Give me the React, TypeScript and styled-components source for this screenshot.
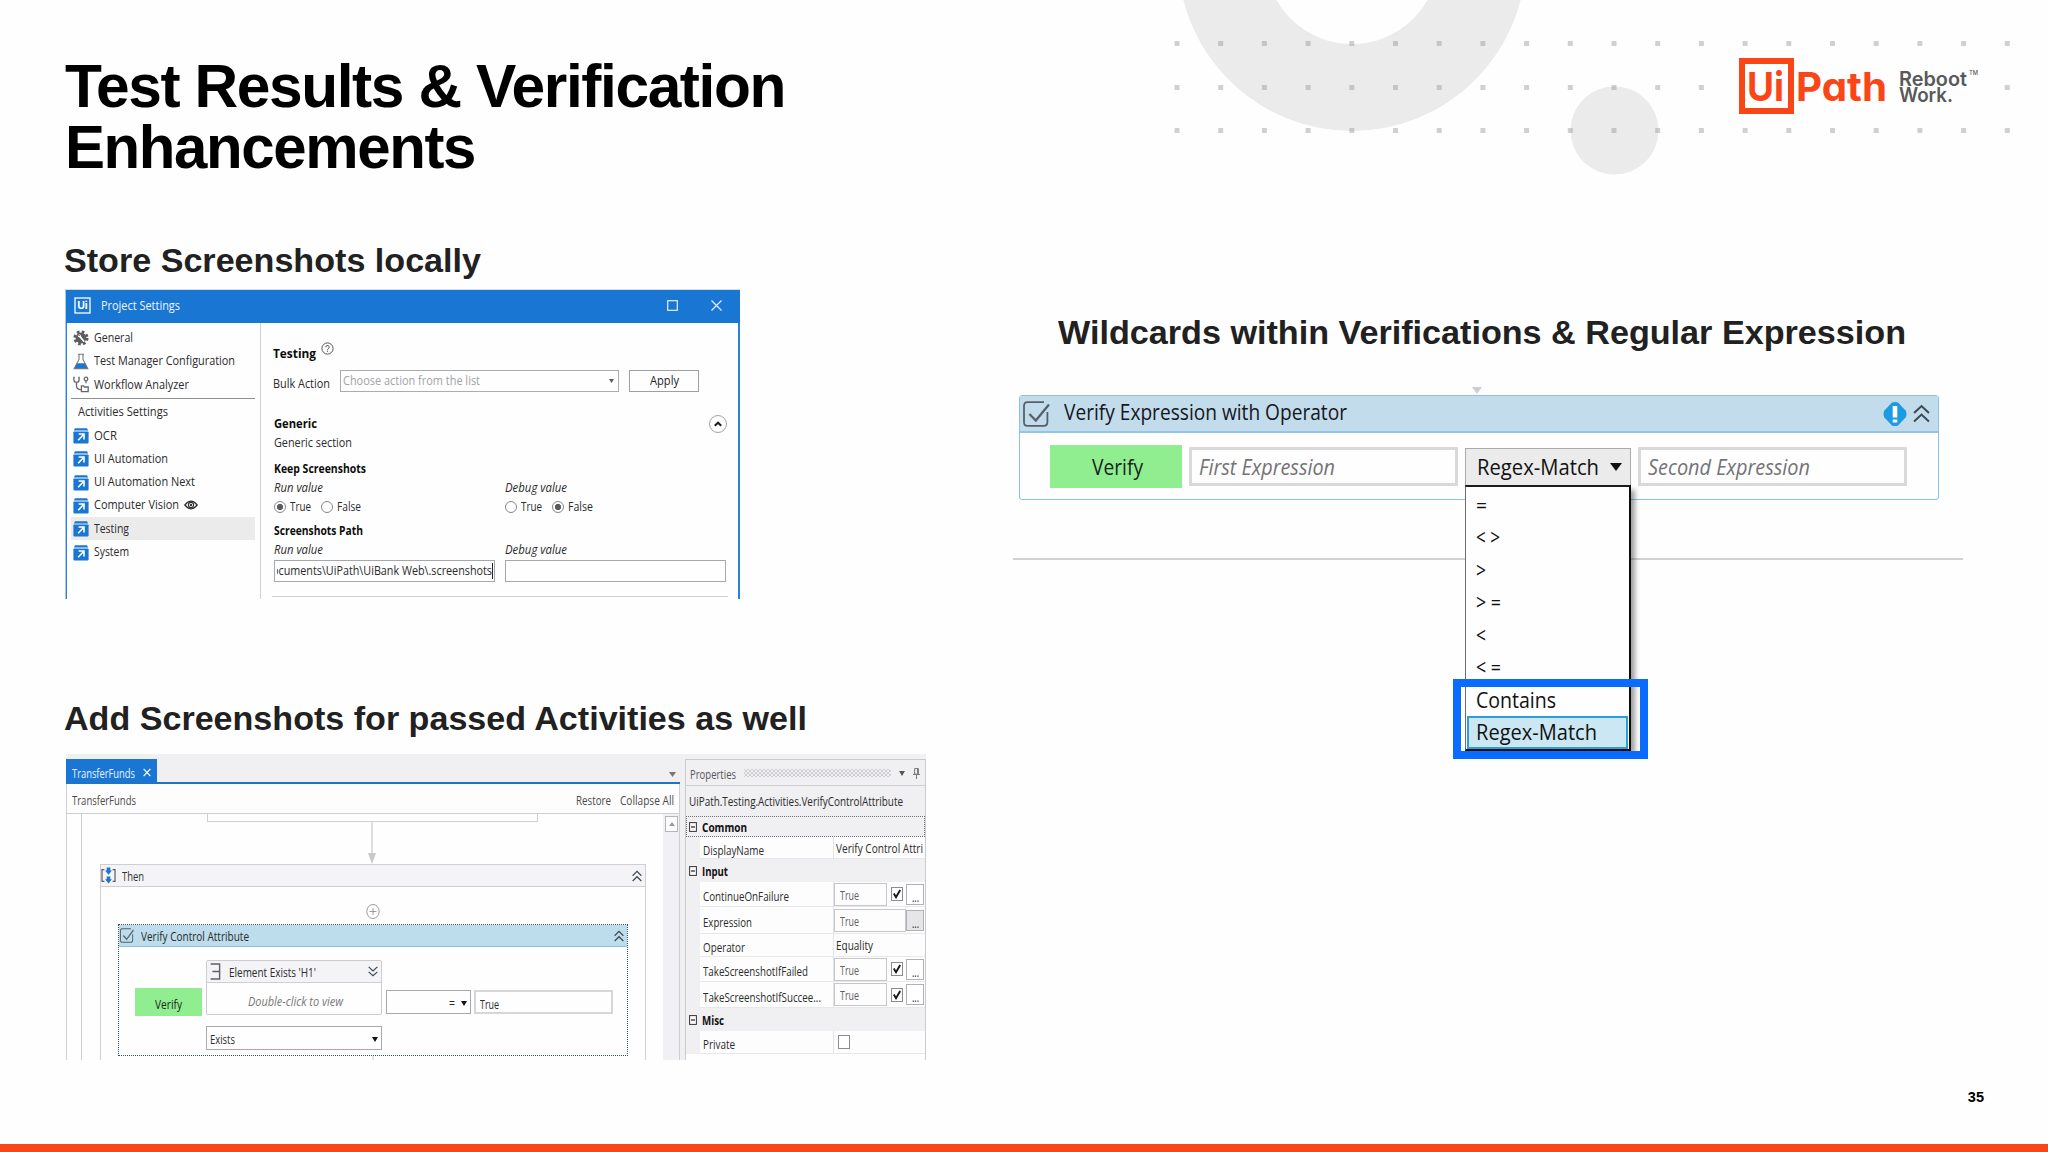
import React, { useLayoutEffect, useRef } from "react";
import styled, { createGlobalStyle, css } from "styled-components";

const Global = createGlobalStyle`
  * { box-sizing: border-box; }
  html, body { margin: 0; padding: 0; background: #fefefe; }
  body { font-family: "Open Sans", "Noto Sans", sans-serif; color: #2b2b2b; overflow: hidden; }
`;

/* ---------- text that condenses to a given width ---------- */

const TextSlot = styled.span<{ $w: number }>`
  display: inline-flex;
  flex: none;
  width: ${(p) => p.$w}px;
  white-space: nowrap;
`;

const TextRun = styled.span`
  display: inline-block;
  flex: none;
  white-space: pre;
  transform-origin: 0 50%;
`;

function T({ w, children }: { w: number; children: React.ReactNode }) {
  const ref = useRef<HTMLSpanElement>(null);
  useLayoutEffect(() => {
    const el = ref.current;
    if (!el) return;
    el.style.transform = "none";
    const natural = el.getBoundingClientRect().width;
    if (natural) el.style.transform = `scaleX(${w / natural})`;
  });
  return (
    <TextSlot $w={w}>
      <TextRun ref={ref}>{children}</TextRun>
    </TextSlot>
  );
}

/* ---------- slide ---------- */

const Slide = styled.main`
  position: relative;
  width: 2048px;
  height: 1152px;
  overflow: hidden;
  background: #fefefe;
  display: grid;
  grid-template-columns: 1013px 1fr;
  grid-template-rows: 1fr 8px;
`;

const Backdrop = styled.svg`
  position: absolute;
  left: 0;
  top: 0;
`;

const LeftColumn = styled.section`
  position: relative;
  padding: 56px 0 0 65px;
`;

const RightColumn = styled.section`
  position: relative;
  display: flex;
  flex-direction: column;
`;

const Title = styled.h1`
  margin: 0;
  height: 122px;
  font: bold 60.5px/61px "Liberation Sans", Arial, sans-serif;
  letter-spacing: -1.4px;
  color: #000;
`;

const Subtitle = styled.h2<{ $top: number; $left?: number }>`
  margin: ${(p) => p.$top}px 0 0 ${(p) => p.$left ?? -1}px;
  height: 40px;
  font: bold 34px/41px "Liberation Sans", Arial, sans-serif;
  color: #212121;
`;

const FooterBar = styled.div`
  grid-column: 1 / 3;
  background: #fa4616;
`;

const PageNumber = styled.div`
  margin: auto 64px 37px auto;
  font: bold 14.5px/20px "Liberation Sans", Arial, sans-serif;
  color: #000;
`;

/* ---------- logo ---------- */

const Logo = styled.div`
  position: relative;
  display: flex;
  margin: 58px 0 0 726px;
  height: 56px;
  font-family: Inter, "Open Sans", sans-serif;
  font-feature-settings: "cv11" 1;
`;

const LogoBox = styled.div`
  width: 55px;
  height: 56px;
  border: 6px solid #fa4616;
  padding-left: 2px;
  font-size: 40px;
  line-height: 45px;
  font-weight: 700;
  color: #fa4616;
`;

const LogoWord = styled.div`
  margin-left: 2px;
  font-size: 39.5px;
  line-height: 58px;
  font-weight: 700;
  color: #fa4616;
`;

const Tagline = styled.div`
  display: flex;
  flex-direction: column;
  margin: 13px 0 0 12px;
  font-size: 20px;
  line-height: 16px;
  font-weight: 600;
  color: #58595b;
`;

const Trademark = styled.div`
  margin: 10px 0 0 2px;
  font-size: 6px;
  line-height: 10px;
  font-weight: 500;
  color: #58595b;
`;

/* ---------- project settings window ---------- */

const Window = styled.div`
  margin-top: 9px;
  width: 675px;
  height: 310px;
  border-top: 1px solid #d5dbe0;
  border-left: 1px solid #a9c6e2;
  display: flex;
  flex-direction: column;
  overflow: hidden;
`;

const WindowBar = styled.div`
  flex: none;
  height: 33px;
  background: #1976d2;
  color: #f2f7fd;
  display: flex;
  align-items: center;
  padding: 0 0 2px 8px;
  font-size: 12px;
  svg { flex: none; }
`;

const WindowIconGap = styled.span`
  width: 10px;
`;

const WindowButtons = styled.div`
  display: flex;
  align-items: center;
  gap: 33px;
  margin-left: auto;
  margin-right: 18px;
`;

const WindowBody = styled.div`
  flex: 1;
  min-height: 0;
  display: flex;
  border-left: 1px solid #2b83d6;
  border-right: 2px solid #2b83d6;
`;

const Sidebar = styled.nav`
  width: 194px;
  border-right: 1px solid #cfcfd4;
  padding: 3.5px 0 0 4px;
  font-size: 12px;
`;

const NavItem = styled.div<{ $active?: boolean }>`
  width: 184px;
  height: 23.3px;
  padding-left: 2px;
  display: flex;
  align-items: center;
  gap: 5px;
  line-height: 20px;
  background: ${(p) => (p.$active ? "#ebebeb" : "transparent")};
  svg { flex: none; }
`;

const NavHeading = styled.div`
  width: 184px;
  height: 25.500px;
  margin-top: 2px;
  border-top: 1px solid #8d8f92;
  padding: 3px 0 0 7px;
  line-height: 20px;
`;

const Settings = styled.div`
  flex: 1;
  padding-left: 12px;
  font-size: 12px;
  line-height: 18px;
`;

const Line = styled.div<{ $h: number; $bold?: boolean; $italic?: boolean; $x?: number; $pull?: number; $size?: number }>`
  display: flex;
  align-items: center;
  height: ${(p) => p.$h}px;
  margin-top: ${(p) => p.$pull ?? 0}px;
  padding-left: ${(p) => p.$x ?? 1}px;
  font-size: ${(p) => p.$size ?? 12}px;
  color: ${(p) => (p.$bold ? "#0c0c0c" : "#2b2b2b")};
  font-weight: ${(p) => (p.$bold ? 700 : 400)};
  font-style: ${(p) => (p.$italic ? "italic" : "normal")};
`;

const HelpIcon = styled.svg`
  margin: -9px 0 0 5px;
`;

const Split = styled.div`
  display: grid;
  grid-template-columns: 231px 1fr;
  width: 453px;
`;

const SelectBox = styled.div`
  width: 279px;
  height: 22px;
  margin-left: 10px;
  margin-top: -6px;
  border: 1px solid #acacae;
  color: #a3a3a5;
  display: flex;
  align-items: center;
  justify-content: space-between;
  padding: 0 4px 0 2px;
`;

const ApplyButton = styled.div`
  width: 70px;
  height: 22px;
  margin-left: 10px;
  margin-top: -6px;
  border: 1px solid #a0a0a4;
  display: flex;
  align-items: center;
  justify-content: center;
  color: #1d1d1d;
`;

const CollapseButton = styled.div`
  width: 18px;
  height: 18px;
  margin-left: auto;
  margin-right: 11px;
  border: 1px solid #a4a4a6;
  border-radius: 50%;
  display: flex;
  align-items: center;
  justify-content: center;
`;

const Radio = styled.span<{ $on?: boolean; $gap?: number }>`
  flex: none;
  width: 12px;
  height: 12px;
  border-radius: 50%;
  border: 1px solid #85868a;
  margin: 0 4px 0 ${(p) => p.$gap ?? -0.5}px;
  background: ${(p) => (p.$on ? "radial-gradient(circle, #5a5b5e 0 2.8px, #fff 3.5px)" : "#fff")};
`;

const PathField = styled.div`
  width: 221px;
  height: 22px;
  border: 1px solid #a6a7ab;
  display: flex;
  align-items: center;
  justify-content: flex-end;
  padding-left: 2px;
`;

const PathClip = styled.span`
  width: 216px;
  display: flex;
  justify-content: flex-end;
  overflow: hidden;
`;

const Caret = styled.i`
  width: 1px;
  height: 16px;
  background: #222;
  margin-right: 1px;
`;

const Rule = styled.div`
  width: 456px;
  height: 1px;
  margin-top: 8px;
  margin-left: -1px;
  background: #d0d1d4;
`;

/* ---------- designer window ---------- */

const Studio = styled.div`
  margin-left: 1px;
  margin-top: 16px;
  width: 860px;
  height: 306px;
  background: #f0eff1;
  display: flex;
  font-size: 12.7px;
  line-height: 18px;
`;

const Designer = styled.div`
  width: 614px;
  display: flex;
  flex-direction: column;
`;

const TabStrip = styled.div`
  height: 30px;
  border-bottom: 2px solid #1f74c6;
  display: flex;
  align-items: flex-end;
  justify-content: space-between;
`;

const Tab = styled.div`
  width: 91px;
  height: 23px;
  background: #1976d2;
  color: #e9f3fd;
  display: flex;
  align-items: center;
  gap: 8px;
  padding: 4px 0 0 6px;
`;

const TabMenu = styled.span`
  display: flex;
  margin: 0 4px 5px 0;
`;

const Breadcrumb = styled.div`
  height: 30px;
  background: #fdfdfd;
  border-right: 1px solid #cfcfd3;
  border-left: 1px solid #cfcfd3;
  border-bottom: 1px solid #cfcfd3;
  display: flex;
  align-items: center;
  padding: 3px 5px 0 5px;
  gap: 9px;
  color: #4a4a4c;
`;

const Spacer = styled.span`
  flex: 1;
`;

const CanvasRow = styled.div`
  flex: 1;
  display: flex;
  min-height: 0;
  border-right: 1px solid #cfcfd3;
  border-left: 1px solid #cfcfd3;
`;

const Canvas = styled.div`
  width: 596px;
  background: #fefefe;
  padding-left: 14px;
  display: flex;
`;

const Lane = styled.div`
  flex: 1;
  border-left: 1px solid #cfcfd3;
  padding-left: 18px;
  overflow: hidden;
`;

const PreviousBlock = styled.div`
  width: 331px;
  height: 8px;
  margin-left: 107px;
  border: 1px solid #cfcfd4;
  border-top: 0;
`;

const Flow = styled.svg`
  display: block;
  margin-left: 267px;
`;

const ThenBlock = styled.div`
  width: 546px;
  height: 220px;
  border: 1px solid #cfced4;
  border-bottom: 0;
`;

const BlockHead = styled.div`
  height: 22px;
  background: #f4f3f6;
  border-bottom: 1px solid #cfced4;
  display: flex;
  align-items: center;
  gap: 6px;
  padding: 0 3px 0 0;
  color: #333;
  svg { flex: none; }
`;

const AddPoint = styled.svg`
  display: block;
  margin: 16px 0 4px 264px;
`;

const VerifyBlock = styled.div`
  width: 510px;
  height: 132px;
  margin-left: 17px;
  border: 1.5px dotted #37506a;
  display: flex;
  flex-direction: column;
`;

const VerifyHead = styled.div`
  height: 22px;
  flex: none;
  background: #bddcec;
  border-bottom: 1px solid #8fc0da;
  display: flex;
  align-items: center;
  gap: 7px;
  padding: 0 3px 0 1px;
  svg { flex: none; }
`;

const VerifyGrid = styled.div`
  display: grid;
  grid-template-columns: 67px 176px 85px 138px;
  column-gap: 4px;
  padding: 13px 0 0 16px;
  align-items: start;
`;

const VerifyChip = styled.div<{ $big?: boolean }>`
  background: #90ee90;
  color: #16251a;
  display: flex;
  align-items: center;
  justify-content: center;
  ${(p) =>
    p.$big
      ? css`
          width: 132px;
          height: 43px;
          padding: 1px 0 0 3px;
        `
      : css`
          width: 67px;
          height: 28px;
          margin-top: 28px;
          padding-top: 3px;
        `}
`;

const ElementCard = styled.div`
  height: 55px;
  border: 1px solid #cbcbd0;
  border-radius: 2px;
`;

const ElementHead = styled.div`
  height: 22px;
  background: #f4f3f6;
  border-bottom: 1px solid #cfced4;
  display: flex;
  align-items: center;
  padding: 0 3px;
  svg { flex: none; }
`;

const ElementName = styled.span`
  display: flex;
  margin: 0 auto 0 8px;
`;

const ElementHint = styled.div`
  height: 34px;
  display: flex;
  align-items: center;
  justify-content: center;
  padding-left: 2px;
  padding-top: 2px;
  color: #77777b;
  font-style: italic;
`;

const Combo = styled.div<{ $top: number }>`
  height: 24px;
  margin-top: ${(p) => p.$top}px;
  border: 1px solid #a9a9ad;
  display: flex;
  align-items: center;
  justify-content: space-between;
  padding: 2px 3px 0 3px;
`;

const OperatorTail = styled.div`
  display: flex;
  align-items: center;
  gap: 6px;
  margin-left: auto;
`;

const ValueField = styled.div`
  height: 24px;
  margin-top: 30px;
  margin-left: -1px;
  border: 2px solid #d6d6da;
  display: flex;
  align-items: center;
  padding: 4px 0 0 4px;
`;

const Scrollbar = styled.div`
  flex: 1;
  background: #f1f0f4;
  padding: 2px 0 0 2px;
`;

const ScrollButton = styled.div`
  width: 13px;
  height: 16px;
  border: 1px solid #b5b5b9;
  background: #fbfbfc;
  display: flex;
  align-items: center;
  justify-content: center;
`;

/* ---------- properties ---------- */

const Properties = styled.aside`
  width: 241px;
  margin: 5px 0 0 5px;
  border: 1px solid #c9c9ce;
  border-bottom: 0;
  display: flex;
  flex-direction: column;
  overflow: hidden;
`;

const PropHeader = styled.div`
  height: 26px;
  border-bottom: 1px solid #cfcfd3;
  display: flex;
  align-items: center;
  padding: 2px 5px 0 4px;
  color: #55555a;
  svg { flex: none; }
`;

const Grip = styled.span`
  width: 147px;
  height: 8px;
  margin: -2px 8px 0 8px;
  background:
    radial-gradient(circle, #bcbcc1 0 0.6px, transparent 0.9px) 0 0 / 4px 4px,
    radial-gradient(circle, #bcbcc1 0 0.6px, transparent 0.9px) 2px 2px / 4px 4px;
`;

const TypeName = styled.div`
  height: 30px;
  display: flex;
  align-items: center;
  padding-left: 3px;
`;

const Category = styled.div<{ $focus?: boolean; $h: number }>`
  height: ${(p) => p.$h}px;
  border: 1px dotted ${(p) => (p.$focus ? "#707074" : "transparent")};
  display: flex;
  align-items: center;
  gap: 5px;
  padding-left: 2px;
  padding-top: 1px;
  color: #111;
  font-weight: 700;
  svg { flex: none; }
`;

const PropRow = styled.div<{ $h: number }>`
  height: ${(p) => p.$h}px;
  margin-left: 14px;
  display: grid;
  grid-template-columns: 134px 1fr;
  background: #fdfdfd;
  border-bottom: 1px solid #e8e7ea;
`;

const PropName = styled.div`
  border-right: 1px solid #e3e2e6;
  padding: 4px 0 0 3px;
  display: flex;
  align-items: center;
`;

const PropValue = styled.div`
  display: flex;
  align-items: center;
`;

const PlainValue = styled.span`
  padding-left: 2px;
  display: flex;
`;

const ExprBox = styled.div<{ $w: number }>`
  width: ${(p) => p.$w}px;
  height: 23px;
  border: 1px solid #c6c6cb;
  padding: 1px 0 0 5px;
  color: #606064;
  display: flex;
  align-items: center;
`;

const Check = styled.span<{ $gap?: number }>`
  width: 12px;
  height: 14px;
  margin: 0 3px 0 ${(p) => p.$gap ?? 4}px;
  border: 1px solid #8c8c90;
  background: #fff;
  display: flex;
  align-items: center;
  justify-content: center;
`;

const More = styled.span<{ $grey?: boolean }>`
  width: 18px;
  height: 21px;
  border: 1px solid #b0b0b5;
  background: ${(p) => (p.$grey ? "#e6e6e9" : "#fff")};
  display: flex;
  align-items: flex-end;
  justify-content: center;
  line-height: 14px;
`;

const PropBlank = styled.div`
  flex: 1;
  background: #fefefe;
`;

/* ---------- verify expression activity ---------- */

const Stage = styled.div`
  position: relative;
  height: 173px;
  width: 950px;
  margin-top: 35px;
  border-bottom: 2px solid #d2d2d4;
  font-size: 21px;
  line-height: 30px;
`;

const DropMark = styled.svg`
  display: block;
  margin: 0 0 1px 459px;
`;

const Activity = styled.div`
  width: 920px;
  height: 105px;
  margin-left: 6px;
  border: 1.5px solid #8cc1e8;
  border-radius: 3px;
  background: #fefefe;
  display: flex;
  flex-direction: column;
`;

const ActivityHead = styled.div`
  height: 37px;
  flex: none;
  background: #c3dcec;
  border-bottom: 2px solid #94c4e6;
  display: flex;
  align-items: center;
  padding: 0 8px 0 3px;
  color: #15151c;
  svg { flex: none; }
`;

const ActivityTitle = styled.span`
  display: flex;
  margin: -4px auto 0 14px;
`;

const HeadGap = styled.span`
  width: 6px;
`;

const ActivityBody = styled.div`
  flex: 1;
  display: flex;
  align-items: center;
  padding: 1px 0 0 30px;
`;

const Expression = styled.div<{ $left: number }>`
  width: 269px;
  height: 39px;
  margin-left: ${(p) => p.$left}px;
  border: 3px solid #d9d9db;
  padding-left: 7px;
  color: #737377;
  font-style: italic;
  display: flex;
  align-items: center;
`;

const OperatorSelect = styled.div`
  position: relative;
  width: 166px;
  height: 38px;
  margin-left: 7px;
  border: 1px solid #a9a9ab;
  background: #ebebec;
  color: #111;
  display: flex;
  align-items: center;
  padding-left: 11px;
  gap: 11px;
`;

const Menu = styled.div`
  position: absolute;
  left: -1px;
  top: 36px;
  z-index: 2;
  width: 166px;
  height: 266px;
  border: 1px solid #6d6d6f;
  border-top: 2px solid #1c1c1e;
  border-right: 2px solid #0c0c0e;
  border-bottom: 2px solid #0c0c0e;
  background: #fefefe;
  box-shadow: 5px 4px 5px -1px rgba(0, 0, 0, 0.38);
  padding: 2px 1px 0 1px;
`;

const MenuItem = styled.div<{ $selected?: boolean }>`
  height: 32.500px;
  border: 2px solid ${(p) => (p.$selected ? "#2c9fd8" : "transparent")};
  background: ${(p) => (p.$selected ? "#cbe7f4" : "transparent")};
  display: flex;
  align-items: center;
  padding-left: 7px;
  color: #111;
`;

const Highlight = styled.div`
  position: absolute;
  left: -13px;
  top: 230px;
  z-index: 3;
  width: 195px;
  height: 80px;
  border: 8px solid #0a6cff;
`;

/* ---------- icons ---------- */

const PackageIcon = () => (
  <svg width="16" height="17" viewBox="0 0 16 17">
    <path d="M2 1.2h12l1.2 2.3H.8z" fill="#1976d2" />
    <rect x="0.4" y="4.4" width="15.2" height="12" rx="0.8" fill="#1976d2" />
    <path d="M5.6 7h5.4v5.4M10.8 7.2l-5.6 6" fill="none" stroke="#fff" strokeWidth="1.6" />
  </svg>
);

const GearIcon = () => (
  <svg width="16" height="16" viewBox="0 0 16 16">
    <circle cx="8" cy="8" r="6.2" fill="none" stroke="#5c5c5e" strokeWidth="2.8" strokeDasharray="2.6 2.27" />
    <circle cx="8" cy="8" r="5.4" fill="#5c5c5e" />
    <path d="M6.2 5.6l4.6 5.6" stroke="#fff" strokeWidth="1.7" strokeLinecap="round" />
    <circle cx="6.3" cy="5.8" r="1.5" fill="#fff" />
    <path d="M5.2 4.4l1.5 1.5" stroke="#5c5c5e" strokeWidth="1.1" />
  </svg>
);

const FlaskIcon = () => (
  <svg width="16" height="17" viewBox="0 0 16 17">
    <path d="M3.6 10.2h8.8l2.4 5.2H1.2z" fill="#1976d2" />
    <path d="M5 1.2h6M6 1.2v5.2L1.2 15.6h13.6L10 6.4V1.2" fill="none" stroke="#77797d" strokeWidth="1.1" />
  </svg>
);

const AnalyzerIcon = () => (
  <svg width="16" height="17" viewBox="0 0 16 17" fill="none" stroke="#66676b" strokeWidth="1.3">
    <path d="M1.8 1.4H.9v2.4a2.6 2.6 0 0 0 5.2 0V1.4h-.9M3.5 6.4v3.4q0 3.8 4.400 3.8" />
    <circle cx="13" cy="3" r="1.8" />
    <path d="M13 4.8v2.4M8.4 15.6V9.8h2.2l.8 1.2h3.8v4.6z" />
  </svg>
);

const EyeIcon = () => (
  <svg width="14" height="10" viewBox="0 0 14 10">
    <path d="M.8 5Q7-2.6 13.2 5 7 12.6.8 5z" fill="none" stroke="#333" strokeWidth="1.2" />
    <circle cx="7" cy="5" r="2.6" fill="none" stroke="#333" strokeWidth="1.1" />
    <circle cx="7" cy="5" r="1.2" fill="#333" />
  </svg>
);

const Triangle = ({ w, h, color, up }: { w: number; h: number; color: string; up?: boolean }) => (
  <svg width={w} height={h} viewBox="0 0 10 10" preserveAspectRatio="none">
    <path d={up ? "M0 10h10L5 0z" : "M0 0h10L5 10z"} fill={color} />
  </svg>
);

const Chevrons = ({ w, h, down }: { w: number; h: number; down?: boolean }) => (
  <svg width={w} height={h} viewBox="0 0 16 18" preserveAspectRatio="none">
    <path
      d={down ? "M1 1.5l7 6.5 7-6.5M1 9.5l7 6.5 7-6.5" : "M1 8.5L8 2l7 6.5M1 16.5L8 10l7 6.5"}
      fill="none"
      stroke="#3c4852"
      strokeWidth="1.9"
    />
  </svg>
);

const CheckTile = ({ w, h }: { w: number; h: number }) => (
  <svg width={w} height={h} viewBox="0 0 27 26" preserveAspectRatio="none" fill="none" stroke="#56606a" strokeWidth="1.8">
    <path d="M21 1.2H4.6Q1 1.2 1 4.8v16.4q0 3.6 3.6 3.6h16q3.8 0 3.8-3.6V11" />
    <path d="M6.4 13l6.4 6.6L26 3.4" strokeWidth="2.3" />
  </svg>
);

const Tick = () => (
  <svg width="8" height="10" viewBox="0 0 8 10">
    <path d="M.8 4.6L3 8.2 7.2 1" fill="none" stroke="#151515" strokeWidth="1.9" />
  </svg>
);

const MinusBox = () => (
  <svg width="8" height="10" viewBox="0 0 8 10">
    <rect x="0.6" y="0.6" width="6.8" height="8.8" fill="#fafafa" stroke="#333" />
    <path d="M2 5h4" stroke="#222" strokeWidth="1.2" />
  </svg>
);

const SequenceIcon = () => (
  <svg width="15" height="17" viewBox="0 0 15 17">
    <path d="M3.4 2.6H1v11.800h2.4M11.6 2.6H14v11.800h-2.4" fill="none" stroke="#5a5b60" strokeWidth="1.2" />
    <path d="M5.7.6h3.6v3h1.6L7.5 7.8 4.1 3.6h1.6zM5.7 9.6h3.6v2.6h1.6l-3.4 4.2-3.4-4.2h1.6z" fill="#1976d2" />
  </svg>
);

const ElementIcon = () => (
  <svg width="11" height="17" viewBox="0 0 11 17" fill="none" stroke="#5f6066" strokeWidth="1.4">
    <path d="M.6 1h9v15h-9M2.4 8.5h7" />
  </svg>
);

const PinIcon = () => (
  <svg width="7" height="11" viewBox="0 0 7 11" fill="none" stroke="#77777c">
    <path d="M1.6.6h3.8v5.6H1.6zM0 6.5h7M3.5 6.5V11" />
    <path d="M4.6.6v5.6" strokeWidth="1.2" />
  </svg>
);

const AlertIcon = () => (
  <svg width="24" height="24" viewBox="0 0 24 24">
    <path d="M9 .6Q12-.4 15 .6L22.6 8.4Q24.400 12 22.6 15.6L15 23.4Q12 24.400 9 23.4L1.4 15.6Q-.4 12 1.4 8.4z" fill="#1b9ce2" />
    <path d="M12 4v11.6M12 17.6v3" stroke="#fff" strokeWidth="4.6" />
  </svg>
);

/* ---------- data ---------- */

const activityPackages: [string, number, boolean?][] = [
  ["OCR", 23],
  ["UI Automation", 74],
  ["UI Automation Next", 101],
  ["Computer Vision", 85, true],
  ["Testing", 35],
  ["System", 35],
];

const operators: [string, number][] = [
  ["=", 11],
  ["< >", 24],
  [">", 10],
  ["> =", 25],
  ["<", 10],
  ["< =", 25],
  ["Contains", 80],
  ["Regex-Match", 121],
];

const dotRows = [43.5, 87.5, 130.5];
const dotColumns = Array.from({ length: 20 }, (_, i) => 1177 + i * 43.7);

function Decoration() {
  return (
    <Backdrop width="2048" height="190">
      <circle cx="1352" cy="-43" r="130.5" fill="none" stroke="#ebebeb" strokeWidth="87" />
      <circle cx="1614.5" cy="130.5" r="44" fill="#ebebeb" />
      {dotRows.map((y, row) =>
        dotColumns.map((x, col) =>
          row === 1 && col > 12 && col < 19 ? null : (
            <rect key={`${row}-${col}`} x={x - 2.5} y={y - 2.5} width="5" height="5" rx="0.5" fill="#8c8c8c" opacity="0.4" />
          )
        )
      )}
    </Backdrop>
  );
}

function ProjectSettings() {
  return (
    <Window>
      <WindowBar>
        <svg width="17" height="17" viewBox="0 0 17 17">
          <rect x="1" y="1" width="15" height="15" fill="none" stroke="#fff" strokeWidth="1.3" />
          <text x="3.2" y="12.2" fontSize="10.5" fontWeight="700" fill="#fff" fontFamily="Inter, sans-serif">Ui</text>
        </svg>
        <WindowIconGap />
        <T w={79}>Project Settings</T>
        <WindowButtons>
          <svg width="11" height="11"><rect x="0.7" y="0.7" width="9.6" height="9.6" fill="none" stroke="#e6f1fc" strokeWidth="1.2" /></svg>
          <svg width="11" height="11"><path d="M.5.5l10 10M10.5.5l-10 10" stroke="#e6f1fc" strokeWidth="1.2" /></svg>
        </WindowButtons>
      </WindowBar>
      <WindowBody>
        <Sidebar>
          <NavItem><GearIcon /><T w={39}>General</T></NavItem>
          <NavItem><FlaskIcon /><T w={141}>Test Manager Configuration</T></NavItem>
          <NavItem><AnalyzerIcon /><T w={95}>Workflow Analyzer</T></NavItem>
          <NavHeading><T w={90}>Activities Settings</T></NavHeading>
          {activityPackages.map(([name, w, eye]) => (
            <NavItem key={name} $active={name === "Testing"}>
              <PackageIcon />
              <T w={w}>{name}</T>
              {eye && <EyeIcon />}
            </NavItem>
          ))}
        </Sidebar>
        <Settings>
          <Line $h={59} $bold $x={0} $size={13}>
            <T w={43}>Testing</T>
            <HelpIcon width="13" height="13" viewBox="0 0 13 13">
              <circle cx="6.5" cy="6.5" r="5.6" fill="none" stroke="#555" />
              <path d="M4.8 5.2a1.7 1.7 0 1 1 2.4 1.5q-.7.4-.7 1.1M6.5 8.7v1.1" fill="none" stroke="#555" />
            </HelpIcon>
          </Line>
          <Line $h={10} $x={0} $pull={-3}>
            <T w={57}>Bulk Action</T>
            <SelectBox>
              <T w={137}>Choose action from the list</T>
              <Triangle w={5} h={4} color="#5a5a5c" />
            </SelectBox>
            <ApplyButton><T w={29}>Apply</T></ApplyButton>
          </Line>
          <Line $h={18} $bold $pull={26}>
            <T w={43}>Generic</T>
            <CollapseButton>
              <svg width="8" height="6" viewBox="0 0 8 6"><path d="M.8 4.8L4 1.7l3.2 3.1" fill="none" stroke="#1d1d1d" strokeWidth="2" /></svg>
            </CollapseButton>
          </Line>
          <Line $h={0} $pull={10}><T w={78}>Generic section</T></Line>
          <Line $h={51} $bold><T w={92}>Keep Screenshots</T></Line>
          <Split>
            <Line $h={0} $italic $pull={-6}><T w={49}>Run value</T></Line>
            <Line $h={0} $italic $pull={-6}><T w={62}>Debug value</T></Line>
            <Line $h={20} $pull={3}>
              <Radio $on /><T w={21}>True</T><Radio $gap={10} /><T w={24}>False</T>
            </Line>
            <Line $h={20} $pull={3}>
              <Radio /><T w={21}>True</T><Radio $gap={10} $on /><T w={25}>False</T>
            </Line>
          </Split>
          <Line $h={28} $bold><T w={89}>Screenshots Path</T></Line>
          <Split>
            <Line $h={9} $italic><T w={49}>Run value</T></Line>
            <Line $h={9} $italic><T w={62}>Debug value</T></Line>
            <Line $h={34}>
              <PathField>
                <PathClip><T w={220}>ocuments\UiPath\UiBank Web\.screenshots</T></PathClip>
                <Caret />
              </PathField>
            </Line>
            <Line $h={34}><PathField /></Line>
          </Split>
          <Rule />
        </Settings>
      </WindowBody>
    </Window>
  );
}

function PropertyRow({ h, name, w, children }: { h: number; name: string; w: number; children: React.ReactNode }) {
  return (
    <PropRow $h={h}>
      <PropName><T w={w}>{name}</T></PropName>
      <PropValue>{children}</PropValue>
    </PropRow>
  );
}

const TrueWithCheck = () => (
  <>
    <ExprBox $w={53}><T w={19}>True</T></ExprBox>
    <Check><Tick /></Check>
    <More><T w={7}>...</T></More>
  </>
);

function PropertiesPanel() {
  return (
    <Properties>
      <PropHeader>
        <T w={46}>Properties</T>
        <Grip />
        <Triangle w={6} h={5} color="#55555a" />
        <Spacer />
        <PinIcon />
      </PropHeader>
      <TypeName><T w={214}>UiPath.Testing.Activities.VerifyControlAttribute</T></TypeName>
      <Category $h={21} $focus><MinusBox /><T w={45}>Common</T></Category>
      <PropertyRow h={22} name="DisplayName" w={61}><PlainValue><T w={87}>Verify Control Attri</T></PlainValue></PropertyRow>
      <Category $h={23}><MinusBox /><T w={26}>Input</T></Category>
      <PropertyRow h={25} name="ContinueOnFailure" w={86}><TrueWithCheck /></PropertyRow>
      <PropertyRow h={27} name="Expression" w={49}>
        <ExprBox $w={72}><T w={19}>True</T></ExprBox>
        <More $grey><T w={7}>...</T></More>
      </PropertyRow>
      <PropertyRow h={23} name="Operator" w={42}><PlainValue><T w={37}>Equality</T></PlainValue></PropertyRow>
      <PropertyRow h={25} name="TakeScreenshotIfFailed" w={105}><TrueWithCheck /></PropertyRow>
      <PropertyRow h={26} name="TakeScreenshotIfSuccee..." w={118}><TrueWithCheck /></PropertyRow>
      <Category $h={23}><MinusBox /><T w={22}>Misc</T></Category>
      <PropertyRow h={23} name="Private" w={32}><Check $gap={4} /></PropertyRow>
      <PropBlank />
    </Properties>
  );
}

function DesignerPanel() {
  return (
    <Designer>
      <TabStrip>
        <Tab>
          <T w={63}>TransferFunds</T>
          <svg width="8" height="9"><path d="M.6.8l6.8 7.4M7.4.8L.6 8.2" stroke="#fff" strokeWidth="1.2" /></svg>
        </Tab>
        <Spacer />
        <TabMenu><Triangle w={7} h={5} color="#77777b" /></TabMenu>
      </TabStrip>
      <Breadcrumb>
        <T w={64}>TransferFunds</T>
        <Spacer />
        <T w={35}>Restore</T>
        <T w={54}>Collapse All</T>
      </Breadcrumb>
      <CanvasRow>
        <Canvas>
          <Lane>
            <PreviousBlock />
            <Flow width="10" height="42" viewBox="0 0 10 42">
              <path d="M5 0v32" stroke="#c9c9cd" strokeWidth="1.2" />
              <path d="M1 31h8L5 42z" fill="#c9c9cd" />
            </Flow>
            <ThenBlock>
              <BlockHead>
                <SequenceIcon />
                <T w={22}>Then</T>
                <Spacer />
                <Chevrons w={10} h={12} />
              </BlockHead>
              <AddPoint width="16" height="17" viewBox="0 0 16 17" fill="none" stroke="#9c9ca1">
                <ellipse cx="8" cy="8.5" rx="6.2" ry="7" />
                <path d="M4.5 8.5h7M8 5v7" />
              </AddPoint>
              <VerifyBlock>
                <VerifyHead>
                  <CheckTile w={14} h={15} />
                  <T w={108}>Verify Control Attribute</T>
                  <Spacer />
                  <Chevrons w={10} h={12} />
                </VerifyHead>
                <VerifyGrid>
                  <VerifyChip><T w={27}>Verify</T></VerifyChip>
                  <div>
                    <ElementCard>
                      <ElementHead>
                        <ElementIcon />
                        <ElementName><T w={87}>Element Exists 'H1'</T></ElementName>
                        <Chevrons w={10} h={11} down />
                      </ElementHead>
                      <ElementHint><T w={95}>Double-click to view</T></ElementHint>
                    </ElementCard>
                    <Combo $top={11}><T w={25}>Exists</T><Triangle w={6} h={5} color="#111" /></Combo>
                  </div>
                  <Combo $top={30}>
                    <OperatorTail><T w={6}>=</T><Triangle w={6} h={5} color="#111" /></OperatorTail>
                  </Combo>
                  <ValueField><T w={19}>True</T></ValueField>
                </VerifyGrid>
              </VerifyBlock>
              <Flow width="10" height="6"><path d="M5 0v6" stroke="#c9c9cd" /></Flow>
            </ThenBlock>
          </Lane>
        </Canvas>
        <Scrollbar>
          <ScrollButton><Triangle w={6} h={4} color="#9a9a9e" up /></ScrollButton>
        </Scrollbar>
      </CanvasRow>
    </Designer>
  );
}

function VerifyExpression() {
  return (
    <Stage>
      <DropMark width="10" height="7"><path d="M0 0h10L5 7z" fill="#cfcfd1" /></DropMark>
      <Activity>
        <ActivityHead>
          <CheckTile w={27} h={26} />
          <ActivityTitle><T w={283}>Verify Expression with Operator</T></ActivityTitle>
          <AlertIcon />
          <HeadGap />
          <Chevrons w={17} h={19} />
        </ActivityHead>
        <ActivityBody>
          <VerifyChip $big><T w={51}>Verify</T></VerifyChip>
          <Expression $left={7}><T w={136}>First Expression</T></Expression>
          <OperatorSelect>
            <T w={122}>Regex-Match</T>
            <Triangle w={12} h={8} color="#111" />
            <Menu>
              {operators.map(([label, w]) => (
                <MenuItem key={label} $selected={label === "Regex-Match"}><T w={w}>{label}</T></MenuItem>
              ))}
            </Menu>
            <Highlight />
          </OperatorSelect>
          <Expression $left={7}><T w={162}>Second Expression</T></Expression>
        </ActivityBody>
      </Activity>
    </Stage>
  );
}

export default function App() {
  return (
    <>
      <Global />
      <Slide>
        <Decoration />
        <LeftColumn>
          <Title>
            <T w={720}>Test Results &amp; Verification</T>
            <br />
            <T w={410}>Enhancements</T>
          </Title>
          <Subtitle $top={62}><T w={417}>Store Screenshots locally</T></Subtitle>
          <ProjectSettings />
          <Subtitle $top={99}><T w={743}>Add Screenshots for passed Activities as well</T></Subtitle>
          <Studio>
            <DesignerPanel />
            <PropertiesPanel />
          </Studio>
        </LeftColumn>
        <RightColumn>
          <Logo>
            <LogoBox><T w={37}>Ui</T></LogoBox>
            <LogoWord><T w={91}>Path</T></LogoWord>
            <Tagline><T w={68}>Reboot</T><T w={54}>Work.</T></Tagline>
            <Trademark><T w={9}>TM</T></Trademark>
          </Logo>
          <Subtitle $top={198} $left={45}><T w={848}>Wildcards within Verifications &amp; Regular Expression</T></Subtitle>
          <VerifyExpression />
          <PageNumber>35</PageNumber>
        </RightColumn>
        <FooterBar />
      </Slide>
    </>
  );
}
